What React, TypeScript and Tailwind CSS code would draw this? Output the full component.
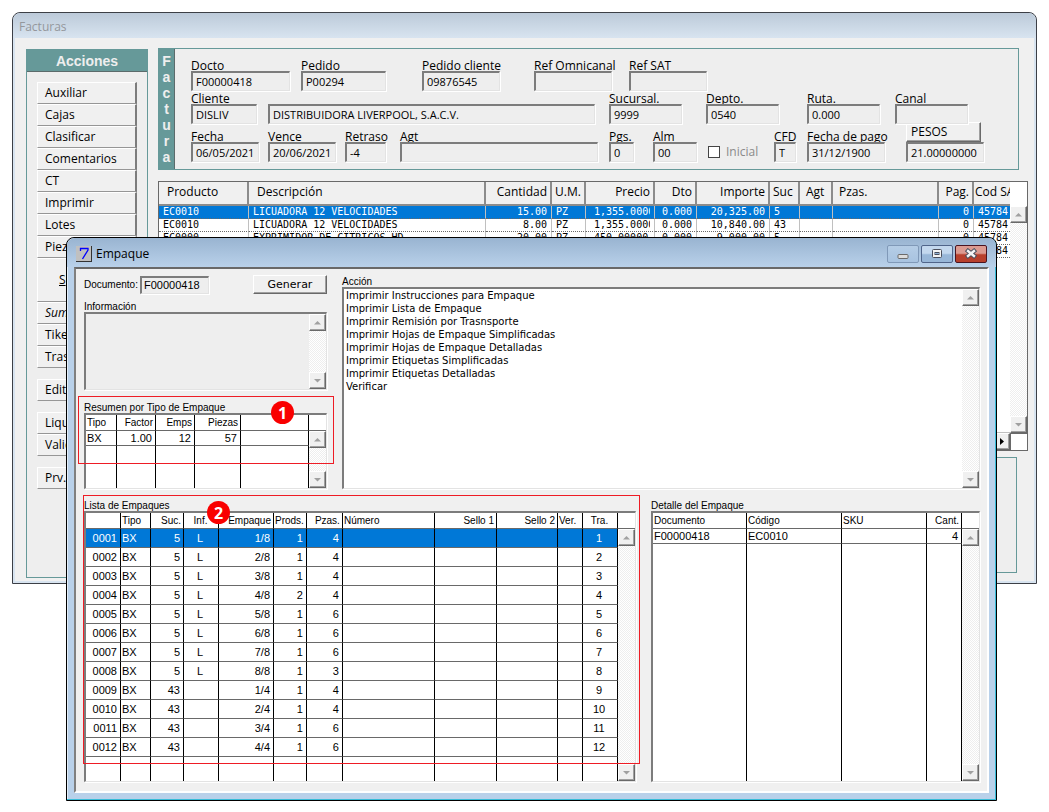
import { ReactNode } from "react";
import clsx from "clsx";

const SUNKEN =
  "border border-t-2 border-t-[#7c7c7c] border-l-2 border-l-[#7c7c7c] border-r-[#e3e3e3] border-b-[#e3e3e3] shadow-[1px_1px_0_#ffffff]";
const RAISED =
  "border border-t-white border-l-white border-r-[#696969] border-b-[#696969] shadow-[inset_-1px_-1px_0_#a0a0a0]";
const TRACK =
  "bg-[repeating-conic-gradient(#eeeeee_0_25%,#ffffff_0_50%)] bg-[length:2px_2px]";

const actionGroups = [
  [
    "Auxiliar",
    "Cajas",
    "Clasificar",
    "Comentarios",
    "CT",
    "Imprimir",
    "Lotes",
    "Piezas",
    "Surtir",
    "Sumar",
    "Tikets",
    "Traspaso",
  ],
  ["Editar"],
  ["Liquidar", "Validar"],
  ["Prv."],
];

type Column = {
  title: string;
  width: string;
  align?: string;
  pad?: string;
};

const invoiceColumns: Column[] = [
  { title: "Producto", width: "w-[90px]", pad: "px-2" },
  { title: "Descripción", width: "w-auto", pad: "px-2" },
  { title: "Cantidad", width: "w-[66px]", align: "text-right" },
  { title: "U.M.", width: "w-[34px]" },
  { title: "Precio", width: "w-[69px]", align: "text-right" },
  { title: "Dto", width: "w-[42px]", align: "text-right" },
  { title: "Importe", width: "w-[73px]", align: "text-right" },
  { title: "Suc", width: "w-[30px]" },
  { title: "Agt", width: "w-[33px]", pad: "px-[6px]" },
  { title: "Pzas.", width: "w-[106px]", pad: "px-[6px]" },
  { title: "Pag.", width: "w-[35px]", align: "text-right" },
  { title: "Cod SAT", width: "w-[36px]", pad: "pl-px" },
];

const invoiceRows = [
  ["EC0010", "LICUADORA 12 VELOCIDADES", "15.00", "PZ", "1,355.0000", "0.000", "20,325.00", "5", "", "", "0", "45784"],
  ["EC0010", "LICUADORA 12 VELOCIDADES", "8.00", "PZ", "1,355.0000", "0.000", "10,840.00", "43", "", "", "0", "45784"],
  ["EC0000", "EXPRIMIDOR DE CITRICOS HD", "20.00", "PZ", "450.00000", "0.000", "9,000.00", "5", "", "", "0", "45784"],
  ["EC0000", "EXPRIMIDOR DE CITRICOS HD", "14.00", "PZ", "450.00000", "0.000", "6,300.00", "43", "", "", "0", "45784"],
];

const summaryColumns: Column[] = [
  { title: "Tipo", width: "w-[31px]" },
  { title: "Factor", width: "w-[39px]", align: "text-right" },
  { title: "Emps", width: "w-[39px]", align: "text-right" },
  { title: "Piezas", width: "w-[46px]", align: "text-right" },
  { title: "", width: "w-auto" },
];

const packageColumns: Column[] = [
  { title: "", width: "w-[35px]", align: "text-right" },
  { title: "Tipo", width: "w-[30px]" },
  { title: "Suc.", width: "w-[33px]", align: "text-right" },
  { title: "Inf.", width: "w-[35px]", align: "text-center" },
  { title: "Empaque", width: "w-[55px]", align: "text-right" },
  { title: "Prods.", width: "w-[32px]", align: "text-right" },
  { title: "Pzas.", width: "w-[36px]", align: "text-right" },
  { title: "Número", width: "w-auto" },
  { title: "Sello 1", width: "w-[62px]", align: "text-right" },
  { title: "Sello 2", width: "w-[61px]", align: "text-right" },
  { title: "Ver.", width: "w-[25px]" },
  { title: "Tra.", width: "w-[35px]", align: "text-center" },
];

const packageRows = [
  ["0001", "BX", "5", "L", "1/8", "1", "4", "", "", "", "", "1"],
  ["0002", "BX", "5", "L", "2/8", "1", "4", "", "", "", "", "2"],
  ["0003", "BX", "5", "L", "3/8", "1", "4", "", "", "", "", "3"],
  ["0004", "BX", "5", "L", "4/8", "2", "4", "", "", "", "", "4"],
  ["0005", "BX", "5", "L", "5/8", "1", "6", "", "", "", "", "5"],
  ["0006", "BX", "5", "L", "6/8", "1", "6", "", "", "", "", "6"],
  ["0007", "BX", "5", "L", "7/8", "1", "6", "", "", "", "", "7"],
  ["0008", "BX", "5", "L", "8/8", "1", "3", "", "", "", "", "8"],
  ["0009", "BX", "43", "", "1/4", "1", "4", "", "", "", "", "9"],
  ["0010", "BX", "43", "", "2/4", "1", "4", "", "", "", "", "10"],
  ["0011", "BX", "43", "", "3/4", "1", "6", "", "", "", "", "11"],
  ["0012", "BX", "43", "", "4/4", "1", "6", "", "", "", "", "12"],
];

const detailColumns: Column[] = [
  { title: "Documento", width: "w-[94px]" },
  { title: "Código", width: "w-[95px]" },
  { title: "SKU", width: "w-auto" },
  { title: "Cant.", width: "w-[35px]", align: "text-right" },
];

const printActions = [
  "Imprimir Instrucciones para Empaque",
  "Imprimir Lista de Empaque",
  "Imprimir Remisión por Trasnsporte",
  "Imprimir Hojas de Empaque Simplificadas",
  "Imprimir Hojas de Empaque Detalladas",
  "Imprimir Etiquetas Simplificadas",
  "Imprimir Etiquetas Detalladas",
  "Verificar",
];

function ArrowButton({ dir }: { dir: "up" | "down" | "right" }) {
  return (
    <button
      type="button"
      aria-label={dir}
      className={clsx("flex h-[17px] w-[17px] shrink-0 items-center justify-center bg-[#f0f0f0]", RAISED)}
    >
      <svg width="9" height="9" viewBox="0 0 9 9">
        {dir === "up" && <path d="M1 6.5h7L4.5 3z" fill="#a0a0a0" />}
        {dir === "down" && <path d="M1 3h7L4.5 6.5z" fill="#a0a0a0" />}
        {dir === "right" && <path d="M3 1v7l4-3.5z" fill="#000" />}
      </svg>
    </button>
  );
}

function Scrollbar() {
  return (
    <div className={clsx("flex w-[17px] flex-1 flex-col justify-between", TRACK)}>
      <ArrowButton dir="up" />
      <ArrowButton dir="down" />
    </div>
  );
}

type FieldProps = {
  id: string;
  label: string;
  value?: string;
  className?: string;
};

function Field({ id, label, value = "", className }: FieldProps) {
  return (
    <div className={clsx("flex min-w-0 flex-col", className)}>
      <label htmlFor={id} className="h-3 leading-[13px] whitespace-nowrap">
        {label}
      </label>
      <input
        id={id}
        defaultValue={value}
        className={clsx("relative h-5 w-full bg-[#eeeeee] pl-[3px] text-[11px] outline-none", SUNKEN)}
      />
    </div>
  );
}

type GridProps = {
  label: string;
  columns: Column[];
  rows: string[][];
  rowHeight: string;
  selected?: number;
  className?: string;
};

function Grid({ label, columns, rows, rowHeight, selected, className }: GridProps) {
  return (
    <div className={clsx("flex bg-white", SUNKEN, className)}>
      <table aria-label={label} className="h-full min-w-0 flex-1 table-fixed border-separate border-spacing-0">
        <colgroup>
          {columns.map((c, i) => (
            <col key={i} className={c.width} />
          ))}
        </colgroup>
        <thead>
          <tr className="h-4">
            {columns.map((c, i) => (
              <th
                key={i}
                className={clsx(
                  "border-r border-b border-r-black border-b-[#696969] pr-[2px] pl-px leading-[14px] font-normal whitespace-nowrap",
                  c.align ?? "text-left"
                )}
              >
                {c.title}
              </th>
            ))}
          </tr>
        </thead>
        <tbody className="text-[11px]">
          {rows.map((row, r) => (
            <tr key={r} className={clsx(rowHeight, r === selected && "bg-[#0078d7] text-white")}>
              {row.map((cell, i) => (
                <td
                  key={i}
                  className={clsx(
                    "border-r border-b border-r-black border-b-[#696969] pr-[3px] pl-px leading-[14px]",
                    columns[i].align
                  )}
                >
                  {cell}
                </td>
              ))}
            </tr>
          ))}
          <tr>
            {columns.map((_, i) => (
              <td key={i} className="border-r border-black" />
            ))}
          </tr>
        </tbody>
      </table>
      <div className="flex flex-col">
        <div className="h-4 border-b border-[#696969]" />
        <Scrollbar />
      </div>
    </div>
  );
}

function Marker({ children, className }: { children: ReactNode; className: string }) {
  return (
    <span
      className={clsx(
        "absolute flex h-[23px] w-[23px] items-center justify-center rounded-full bg-[#f90000] font-['Open_Sans',sans-serif] text-base font-bold text-white",
        className
      )}
    >
      {children}
    </span>
  );
}

function ActionsPanel() {
  return (
    <aside className="w-[122px] shrink-0 border border-[#669999] bg-[#eeeeee]">
      <h2 className="h-[22px] border-b border-[#5c6b6b] bg-[#669999] text-center font-['Liberation_Sans',sans-serif] text-sm leading-[22px] font-bold text-[#eeeeee]">
        Acciones
      </h2>
      <div className="flex flex-col gap-[11px] pt-[10px] pl-[10px]">
        {actionGroups.map((group, g) => (
          <div key={g} className="flex w-[100px] flex-col">
            {group.map((name) => (
              <button
                key={name}
                type="button"
                className={clsx(
                  "border border-t-white border-r-2 border-l-white border-r-[#7c7c7c] border-b-[#969696] bg-[#f0f0f0] text-left",
                  name === "Surtir" ? "h-11 pl-[21px]" : "h-[22px] pl-[7px]",
                  name === "Sumar" && "italic"
                )}
              >
                {name === "Surtir" ? (
                  <>
                    <u>S</u>urtir
                  </>
                ) : (
                  name
                )}
              </button>
            ))}
          </div>
        ))}
      </div>
    </aside>
  );
}

function InvoiceHeader() {
  return (
    <section className="mr-[9px] flex h-[122px] border border-[#669999] bg-[#eeeeee]">
      <h2 className="flex w-4 shrink-0 flex-col items-center border-r border-[#5c6b6b] bg-[#669999] pt-1 font-['Liberation_Sans',sans-serif] text-sm leading-4 font-bold text-[#eeeeee]">
        {"Factura".split("").map((c, i) => (
          <span key={i}>{c}</span>
        ))}
      </h2>
      <div className="min-w-0 flex-1 pt-[10px] pr-[34px] pl-4">
        <div className="flex">
          <Field id="docto" label="Docto" value="F00000418" className="w-[99px]" />
          <Field id="pedido" label="Pedido" value="P00294" className="ml-[11px] w-[85px]" />
          <Field id="pedido-cliente" label="Pedido cliente" value="09876545" className="ml-9 w-[78px]" />
          <Field id="ref-omnicanal" label="Ref Omnicanal" className="ml-[34px] w-[78px]" />
          <Field id="ref-sat" label="Ref SAT" className="ml-[17px] w-[78px]" />
        </div>
        <div className="mt-px flex items-end pr-4">
          <Field id="cliente" label="Cliente" value="DISLIV" className="w-[66px]" />
          <input
            aria-label="Nombre del cliente"
            defaultValue="DISTRIBUIDORA LIVERPOOL, S.A.C.V."
            className={clsx("ml-[11px] h-5 min-w-0 flex-1 bg-[#eeeeee] pl-[3px] text-[11px] outline-none", SUNKEN)}
          />
          <Field id="sucursal" label="Sucursal." value="9999" className="ml-[14px] w-[73px]" />
          <Field id="depto" label="Depto." value="0540" className="ml-6 w-[73px]" />
          <Field id="ruta" label="Ruta." value="0.000" className="ml-7 w-[73px]" />
          <Field id="canal" label="Canal" className="ml-[15px] w-[73px]" />
        </div>
        <div className="mt-[6px] flex h-8 items-end">
          <Field id="fecha" label="Fecha" value="06/05/2021" className="w-[68px]" />
          <Field id="vence" label="Vence" value="20/06/2021" className="ml-[9px] w-[68px]" />
          <Field id="retraso" label="Retraso" value="-4" className="ml-[9px] w-[41px]" />
          <Field id="agt" label="Agt" className="ml-[14px] flex-1" />
          <Field id="pgs" label="Pgs." value="0" className="ml-[11px] w-[25px]" />
          <Field id="alm" label="Alm" value="00" className="ml-[19px] w-11" />
          <label className="ml-[11px] flex h-5 w-[55px] items-center gap-[6px] text-[#8a8a8a]">
            <input type="checkbox" className="h-3 w-3 appearance-none border border-[#444444] bg-white" />
            Inicial
          </label>
          <Field id="cfd" label="CFD" value="T" className="ml-[11px] w-[22px]" />
          <Field id="fecha-pago" label="Fecha de pago" value="31/12/1900" className="ml-[11px] w-[78px]" />
          <div className="ml-[21px] w-[78px]">
            <button type="button" className={clsx("block h-5 w-[75px] bg-[#f0f0f0] pl-1 text-left", RAISED)}>
              PESOS
            </button>
            <input
              aria-label="Tipo de cambio"
              defaultValue="21.00000000"
              className={clsx("block h-5 w-full bg-[#eeeeee] pl-[3px] text-[11px] outline-none", SUNKEN)}
            />
          </div>
        </div>
      </div>
    </section>
  );
}

function InvoiceLines() {
  return (
    <section className="mt-[11px] flex h-[270px] border border-[#696969] bg-white">
      <div className="flex min-w-0 flex-1 flex-col">
        <table className="w-full table-fixed border-separate border-spacing-0">
          <colgroup>
            {invoiceColumns.map((c) => (
              <col key={c.title} className={c.width} />
            ))}
          </colgroup>
          <thead>
            <tr className="h-6">
              {invoiceColumns.map((c) => (
                <th
                  key={c.title}
                  className={clsx(
                    "overflow-hidden border-r-2 border-b-2 border-[#8c8c8c] bg-[#f0f0f0] pb-[3px] leading-[18px] font-normal whitespace-nowrap last:border-r-0",
                    c.align ?? "text-left",
                    c.pad ?? "px-[3px]"
                  )}
                >
                  {c.title}
                </th>
              ))}
            </tr>
          </thead>
          <tbody className="font-['DejaVu_Sans_Mono',monospace] text-[10px]">
            {invoiceRows.map((row, r) => (
              <tr key={r} className={clsx("h-[13px]", r === 0 && "bg-[#0078d7] text-white")}>
                {row.map((cell, i) => (
                  <td
                    key={i}
                    className={clsx(
                      "overflow-hidden border-r border-b border-r-[#c0c0c0] border-b-[#696969] leading-3 whitespace-nowrap [border-bottom-style:dotted] last:border-r-0",
                      invoiceColumns[i].title === "Precio" ? "pr-1 pl-2" : "px-1",
                      invoiceColumns[i].align
                    )}
                  >
                    {invoiceColumns[i].title === "Precio" ? (
                      <span className="block overflow-hidden text-left">{cell}</span>
                    ) : (
                      cell
                    )}
                  </td>
                ))}
              </tr>
            ))}
          </tbody>
        </table>
        <div className={clsx("mt-auto flex justify-end border-t border-[#c0c0c0]", TRACK)}>
          <ArrowButton dir="right" />
        </div>
      </div>
      <div className="flex flex-col">
        <div className="h-6" />
        <Scrollbar />
        <div className="h-[17px] border-t border-l border-[#696969]" />
      </div>
    </section>
  );
}

function InvoiceWindow() {
  return (
    <div className="mx-3 rounded-t-lg border border-[#3c3f46] bg-[#d8e4f0] text-xs">
      <h1 className="h-[25px] rounded-t-lg bg-linear-to-b from-[#bccad9] to-[#d8e4f0] pl-[6px] leading-7 text-[#94979c]">
        Facturas
      </h1>
      <div className="mx-[2px] mb-[2px] flex gap-[10px] bg-[#f0f0f0] pt-[10px] pr-[6px] pb-[3px] pl-[11px]">
        <div className="flex pt-px">
          <ActionsPanel />
        </div>
        <div className="min-w-0 flex-1 pb-[5px]">
          <InvoiceHeader />
          <InvoiceLines />
          <div className="mt-[6px] mr-[11px] h-[116px] border border-[#669999] bg-[#eeeeee]" />
        </div>
      </div>
    </div>
  );
}

function WindowButtons() {
  return (
    <div className="flex gap-[2px]">
      <button
        type="button"
        aria-label="Minimizar"
        className="flex h-[18px] w-8 items-center justify-center rounded-xs border border-[#8099b8] bg-linear-to-b from-[#b5cde6] to-[#a8c3e0]"
      >
        <svg width="12" height="12" viewBox="0 0 12 12">
          <rect x="1" y="6.5" width="10" height="4" rx="1" fill="#dcdcdc" stroke="#6b6b6b" />
        </svg>
      </button>
      <button
        type="button"
        aria-label="Maximizar"
        className="flex h-[18px] w-8 items-center justify-center rounded-xs border border-[#50658a] bg-linear-to-b from-[#c3d8ee] from-45% to-[#98b7d8] to-55%"
      >
        <svg width="12" height="12" viewBox="0 0 12 12">
          <rect x="1.5" y="1.5" width="9" height="8" rx="1" fill="#f4f4f4" stroke="#4a4f5c" />
          <rect x="4" y="4.5" width="4" height="2" fill="#8fb0d4" stroke="#4a4f5c" />
        </svg>
      </button>
      <button
        type="button"
        aria-label="Cerrar"
        className="flex h-[18px] w-8 items-center justify-center rounded-xs border border-[#4a1420] bg-linear-to-b from-[#dc9a90] from-45% to-[#b8402c] to-55%"
      >
        <svg width="14" height="12" viewBox="0 0 14 12">
          <path d="M4 3l6 5M10 3l-6 5" stroke="#4a4f5c" strokeWidth="4.4" strokeLinecap="square" />
          <path d="M4 3l6 5M10 3l-6 5" stroke="#f4f4f4" strokeWidth="2.4" strokeLinecap="square" />
        </svg>
      </button>
    </div>
  );
}

function PackingWindow() {
  return (
    <div className="absolute top-[237px] right-[52px] left-[66px] rounded-t-lg border border-black bg-[#b9d1ea] font-['Liberation_Sans',sans-serif] shadow-[inset_-1px_-1px_0_#38bcd8,inset_1px_0_0_#e4eef8]">
      <header className="flex h-[29px] items-center rounded-t-lg bg-linear-to-b from-[#99b4d1] to-[#b9d1ea] pt-[6px] pr-[9px] pb-1 pl-[9px] font-['Open_Sans',sans-serif] text-xs">
        <svg width="16" height="16" viewBox="0 0 16 16" className="mr-1">
          <rect width="16" height="16" fill="#c0c0c0" />
          <path d="M0 15.5h16M15.5 0v16" stroke="#333" />
          <path d="M4.500 5V2.500h7.500V4L6.500 13" fill="none" stroke="#0000ff" strokeWidth="1.300" />
        </svg>
        <h1 className="flex-1">Empaque</h1>
        <WindowButtons />
      </header>

      <div className="mr-[7px] mb-[7px] ml-[7px] border-t-2 border-r-2 border-b-2 border-l-2 border-t-[#696969] border-r-white border-b-white border-l-[#808080] bg-[#f0f0f0] pr-[7px] pb-[9px] pl-2 text-[10px]">
        <div className="flex gap-[15px] pt-[6px]">
          <div className="w-[243px] shrink-0">
            <div className="flex h-[19px] items-center">
              <label htmlFor="documento" className="w-14 whitespace-nowrap">
                Documento:
              </label>
              <input
                id="documento"
                defaultValue="F00000418"
                className={clsx("h-[18px] w-[69px] bg-[#eeeeee] pl-[2px] text-[11px] outline-none", SUNKEN)}
              />
              <button
                type="button"
                className={clsx(
                  "ml-auto h-[19px] w-[74px] bg-[#f0f0f0] font-['DejaVu_Sans',sans-serif] text-[11px] leading-4",
                  RAISED
                )}
              >
                Generar
              </button>
            </div>
            <label htmlFor="informacion" className="mt-[6px] block h-3 leading-[13px]">
              Información
            </label>
            <div className={clsx("flex h-[78px] bg-[#eeeeee]", SUNKEN)}>
              <textarea id="informacion" className="min-w-0 flex-1 resize-none bg-transparent outline-none" />
              <div className="flex">
                <Scrollbar />
              </div>
            </div>
            <div className="relative pt-[11px]">
              <h2 className="h-3 leading-[13px]">Resumen por Tipo de Empaque</h2>
              <Grid
                label="Resumen por Tipo de Empaque"
                columns={summaryColumns}
                rows={[["BX", "1.00", "12", "57", ""]]}
                rowHeight="h-[15px]"
                className="h-[76px]"
              />
              <div className="pointer-events-none absolute top-[6px] -right-[7px] -left-[6px] h-[68px] border border-[#ee1c25]" />
              <Marker className="top-[11px] left-[187px]">1</Marker>
            </div>
          </div>

          <div className="flex min-w-0 flex-1 flex-col">
            <h2 className="h-3 leading-[13px]">Acción</h2>
            <div className={clsx("flex flex-1 bg-white", SUNKEN)}>
              <ul
                aria-label="Acción"
                className="flex-1 pl-[2px] font-['DejaVu_Sans',sans-serif] text-[10px] leading-[13px]"
              >
                {printActions.map((a) => (
                  <li key={a}>{a}</li>
                ))}
              </ul>
              <div className="flex">
                <Scrollbar />
              </div>
            </div>
          </div>
        </div>

        <div className="mt-[10px] flex gap-[15px]">
          <div className="relative min-w-0 flex-1">
            <h2 className="h-3 leading-[13px]">Lista de Empaques</h2>
            <Grid
              label="Lista de Empaques"
              columns={packageColumns}
              rows={packageRows}
              rowHeight="h-[19px]"
              selected={0}
              className="h-[271px]"
            />
            <div className="pointer-events-none absolute -top-1 -right-1 -left-px h-[269px] border border-[#ee1c25]" />
            <Marker className="top-[2px] left-[123px]">2</Marker>
          </div>
          <div className="w-[329px] shrink-0">
            <h2 className="h-3 leading-[13px]">Detalle del Empaque</h2>
            <Grid
              label="Detalle del Empaque"
              columns={detailColumns}
              rows={[["F00000418", "EC0010", "", "4"]]}
              rowHeight="h-[15px]"
              className="h-[271px]"
            />
          </div>
        </div>
      </div>
    </div>
  );
}

export default function App() {
  return (
    <main className="relative min-h-screen bg-white pt-3 font-['Open_Sans',sans-serif] text-black">
      <InvoiceWindow />
      <PackingWindow />
    </main>
  );
}
